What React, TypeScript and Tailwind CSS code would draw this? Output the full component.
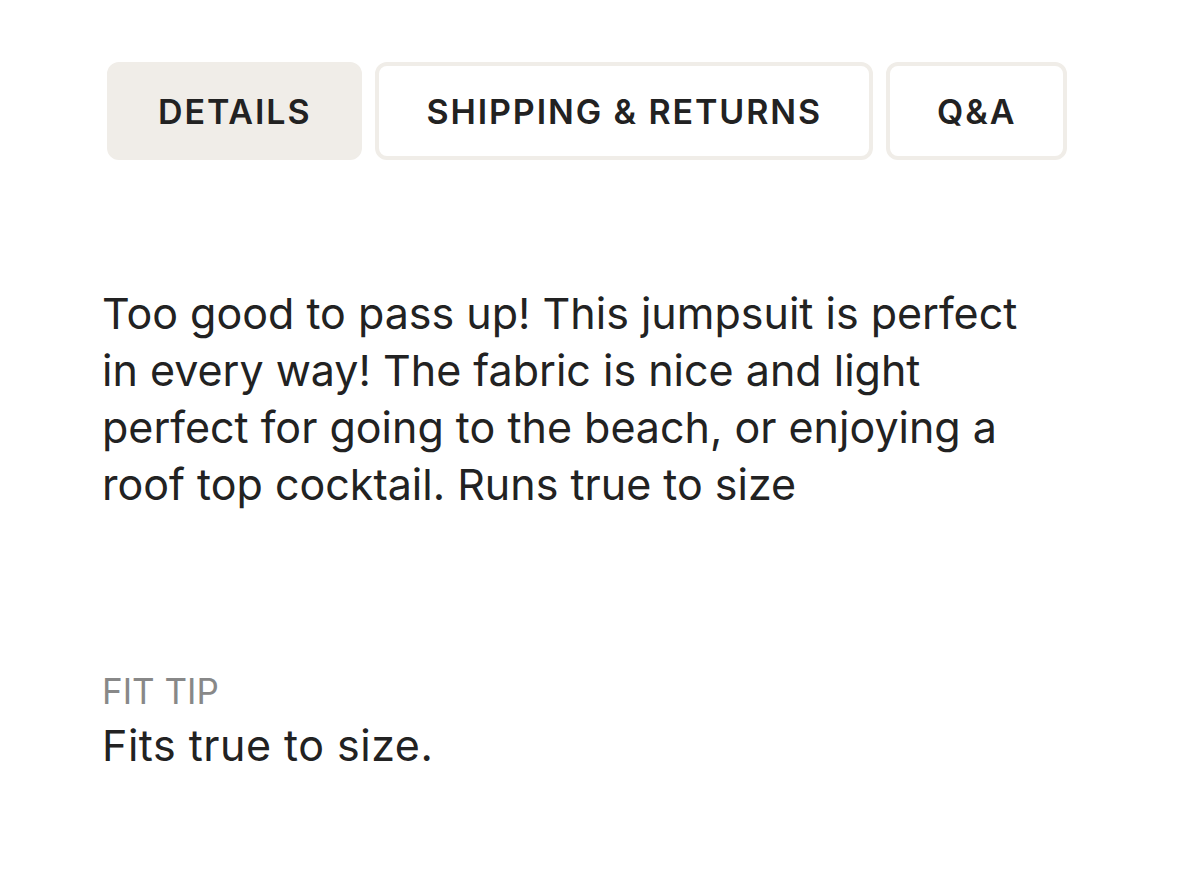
import React, { useState } from 'react';

const tabs = ['DETAILS', 'SHIPPING & RETURNS', 'Q&A'];

const App = () => {
    const [active, setActive] = useState(0);

    return (
        <div className="min-h-[871px] bg-white font-['Inter',sans-serif] text-[#222222]">
            <div className="pl-[102px] pr-[60px] pt-[62px]">
                {/* Tabs */}
                <div className="flex gap-[13px] pl-[5px]">
                    {tabs.map((tab, i) => (
                        <button
                            key={tab}
                            onClick={() => setActive(i)}
                            className={
                                i === active
                                    ? 'h-[98px] rounded-[12px] border-4 border-[#f0ede8] bg-[#f0ede8] px-[47px] text-[34px] font-semibold tracking-[1.9px]'
                                    : 'h-[98px] rounded-[12px] border-4 border-[#f0ede8] bg-white px-[47px] text-[34px] font-semibold tracking-[1.9px]'
                            }
                        >
                            {tab}
                        </button>
                    ))}
                </div>

                {/* Description */}
                <p className="mt-[125px] max-w-[945px] text-[43px] leading-[57px]">
                    Too good to pass up! This jumpsuit is perfect in every way! The fabric is nice and light perfect for going to the beach, or enjoying a roof top cocktail. Runs true to size
                </p>

                {/* Fit tip */}
                <div className="mt-[158px]">
                    <div className="text-[35px] leading-[40px] text-[#888888]">FIT TIP</div>
                    <div className="mt-[9px] text-[43px] leading-[50px] tracking-[0.5px]">Fits true to size.</div>
                </div>
            </div>
        </div>
    );
};

export default App;
